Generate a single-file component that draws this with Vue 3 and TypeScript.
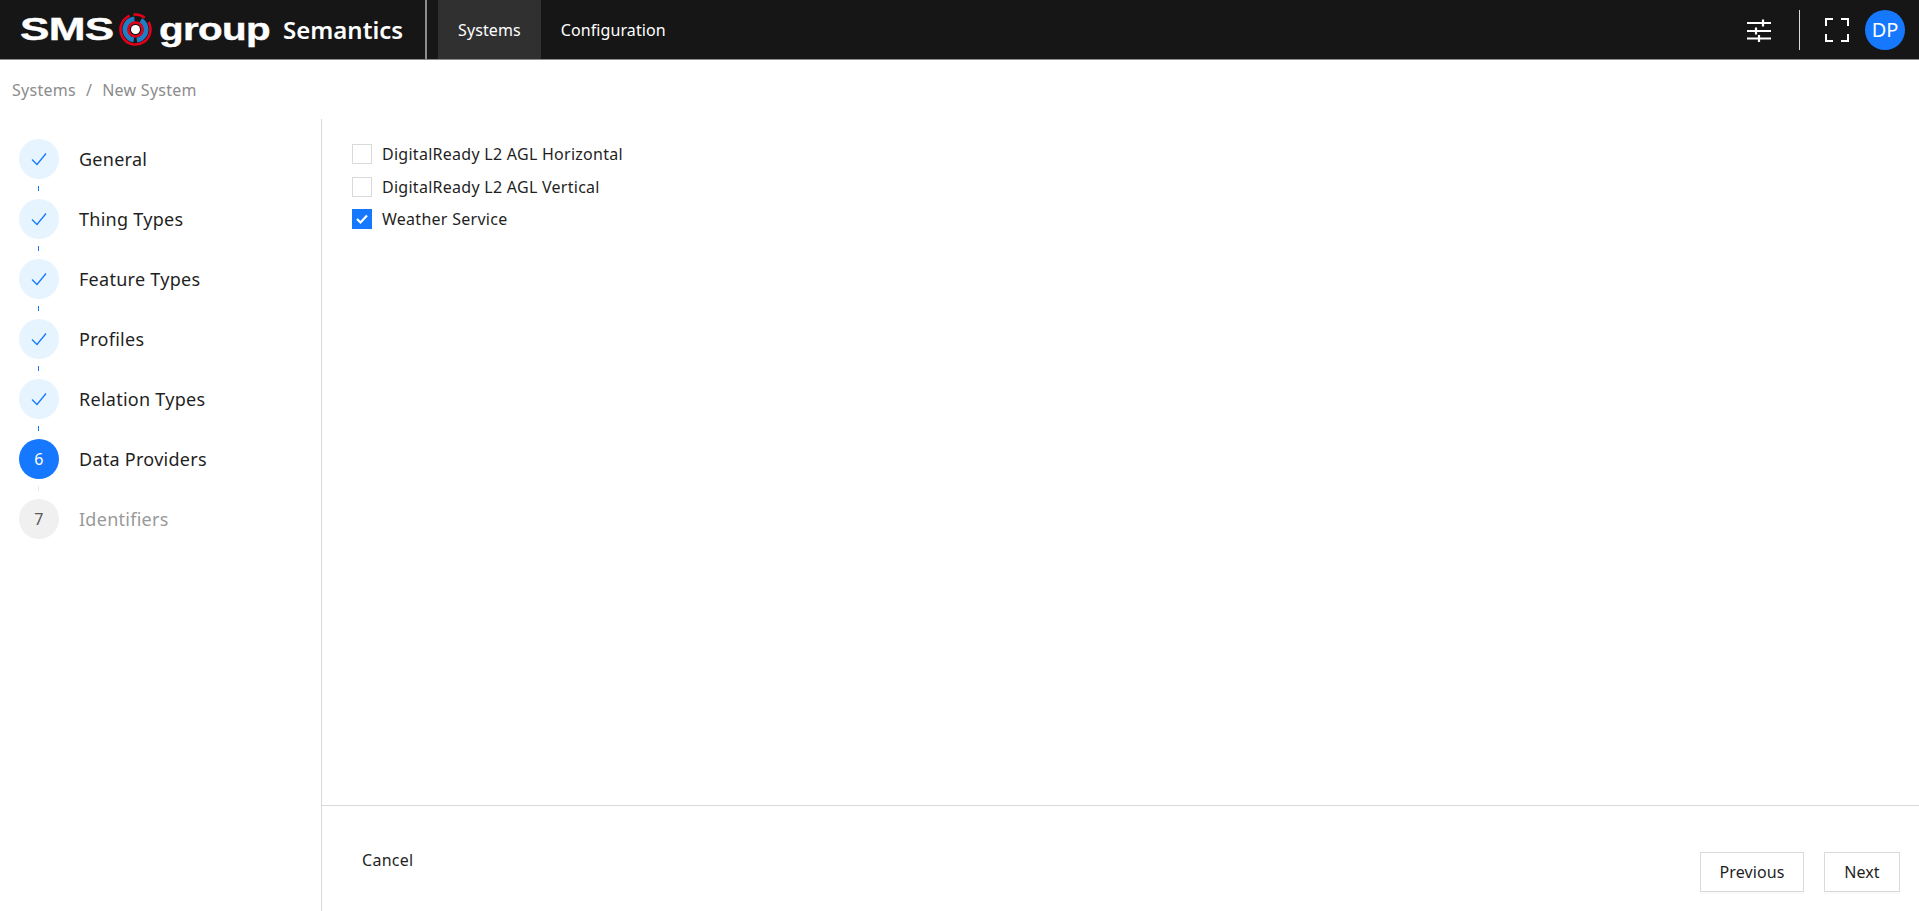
<template>
  <div class="page">
    <header class="topbar">
      <div class="brand">
        <span class="logo-sms">SMS</span>
        <svg class="logo-mark" viewBox="0 0 33 33" width="33" height="33">
          <circle cx="16.500" cy="16.500" r="10.500" fill="none" stroke="#1f7fc4" stroke-width="5" stroke-dasharray="26 3 30 7" transform="rotate(-60 16.500 16.500)" />
          <circle cx="16.500" cy="16.500" r="15" fill="none" stroke="#e2001a" stroke-width="2.600" stroke-dasharray="72 4 12 6" transform="rotate(-30 16.500 16.500)" />
          <circle cx="16.500" cy="16.500" r="7" fill="none" stroke="#e2001a" stroke-width="2.600" />
          <circle cx="16.500" cy="16.500" r="4.500" fill="#fff" />
        </svg>
        <span class="logo-group">group</span>
        <span class="product">Semantics</span>
      </div>
      <nav class="nav">
        <a v-for="item in navItems" :key="item" class="nav-item" :class="{ active: item === 'Systems' }">{{ item }}</a>
      </nav>
      <div class="tools">
        <svg class="tool-icon" viewBox="0 0 24 24" width="24" height="24">
          <path d="M0 5h15M17 5h7M16 1.500v7M0 13h8M10 13h14M9 9.500v7M0 20.500h11M13 20.500h11M12 17v7" fill="none" stroke="#fff" stroke-width="2.200" />
        </svg>
        <span class="tool-sep"></span>
        <svg class="tool-icon" viewBox="0 0 24 24" width="24" height="24">
          <path d="M1 8V1h7M16 1h7v7M23 16v7h-7M8 23H1v-7" fill="none" stroke="#fff" stroke-width="2" />
        </svg>
        <span class="avatar">DP</span>
      </div>
    </header>

    <div class="crumbs">
      <span>Systems</span>
      <span class="crumb-sep">/</span>
      <span>New System</span>
    </div>

    <div class="main">
      <aside class="sidebar">
        <div v-for="(step, i) in steps" :key="step.title" class="step" :class="step.state">
          <div class="step-side">
            <div class="step-circle">
              <svg v-if="step.state === 'done'" viewBox="0 0 16 14" width="16" height="14">
                <path d="M1 7.500l5 5L15 1.500" fill="none" stroke="#1677ff" stroke-width="1.300" />
              </svg>
              <span v-else>{{ i + 1 }}</span>
            </div>
            <span v-if="i < steps.length - 1" class="step-dash"></span>
          </div>
          <span class="step-title">{{ step.title }}</span>
        </div>
      </aside>

      <section class="content">
        <div class="options">
          <label v-for="opt in providers" :key="opt.name" class="option">
            <span class="box" :class="{ checked: opt.checked }">
              <svg v-if="opt.checked" viewBox="0 0 14 12" width="14" height="12">
                <path d="M2 6l3.500 3.500L12 2.500" fill="none" stroke="#fff" stroke-width="2.200" />
              </svg>
            </span>
            <span>{{ opt.name }}</span>
          </label>
        </div>
        <footer class="footer">
          <span class="cancel">Cancel</span>
          <div class="actions">
            <button class="btn btn-prev">Previous</button>
            <button class="btn btn-next">Next</button>
          </div>
        </footer>
      </section>
    </div>
  </div>
</template>

<script setup lang="ts">
const navItems = ['Systems', 'Configuration']

const steps = [
  { title: 'General', state: 'done' },
  { title: 'Thing Types', state: 'done' },
  { title: 'Feature Types', state: 'done' },
  { title: 'Profiles', state: 'done' },
  { title: 'Relation Types', state: 'done' },
  { title: 'Data Providers', state: 'current' },
  { title: 'Identifiers', state: 'todo' }
]

const providers = [
  { name: 'DigitalReady L2 AGL Horizontal', checked: false },
  { name: 'DigitalReady L2 AGL Vertical', checked: false },
  { name: 'Weather Service', checked: true }
]
</script>

<style>
html,
body {
  margin: 0;
  background: #fff;
}
</style>

<style scoped>
.page {
  width: 1919px;
  height: 911px;
  display: flex;
  flex-direction: column;
  font-family: 'Noto Sans', 'Open Sans', sans-serif;
  font-size: 16px;
  letter-spacing: 0.27px;
  color: #1f1f1f;
  overflow: hidden;
}
.topbar {
  height: 59px;
  flex: none;
  display: flex;
  align-items: stretch;
  background: #161616;
  border-bottom: 1px solid #8c8c8c;
  color: #fff;
}
.brand {
  width: 427px;
  flex: none;
  box-sizing: border-box;
  display: flex;
  align-items: center;
  border-right: 2px solid #8c8c8c;
  padding-left: 20px;
  margin-right: 11px;
}
.logo-sms,
.logo-group {
  font-family: 'Liberation Sans', sans-serif;
  font-weight: 700;
  font-size: 32px;
  letter-spacing: -0.5px;
  -webkit-text-stroke: 0.4px #fff;
  display: inline-block;
  transform-origin: left center;
}
.logo-sms {
  width: 99px;
  flex: none;
  transform: scaleX(1.38);
}
.logo-mark {
  flex: none;
  margin-right: 7px;
}
.logo-group {
  width: 124px;
  flex: none;
  transform: scaleX(1.26);
}
.product {
  font-size: 24px;
  font-weight: 600;
  letter-spacing: 0;
}
.nav {
  display: flex;
}
.nav-item {
  display: flex;
  align-items: center;
  padding: 0 20px;
  height: 59px;
  letter-spacing: 0.1px;
}
.nav-item.active {
  background: #303030;
}
.tools {
  margin-left: auto;
  display: flex;
  align-items: center;
  padding-right: 14px;
}
.tool-icon {
  flex: none;
}
.tool-sep {
  width: 1px;
  height: 40px;
  background: #d9d9d9;
  margin: 0 25px 0 28px;
}
.avatar {
  width: 40px;
  height: 40px;
  border-radius: 50%;
  background: #1677ff;
  margin-left: 16px;
  display: flex;
  align-items: center;
  justify-content: center;
  font-size: 20px;
  letter-spacing: 0;
}
.crumbs {
  height: 59px;
  flex: none;
  display: flex;
  align-items: center;
  gap: 10px;
  padding-left: 12px;
  color: #8c8c8c;
}
.main {
  flex: 1;
  display: flex;
  min-height: 0;
}
.sidebar {
  width: 321px;
  flex: none;
  border-right: 1px solid #d9d9d9;
  padding-top: 20px;
}
.step {
  display: flex;
  height: 60px;
  padding-left: 19px;
}
.step-side {
  width: 40px;
  display: flex;
  flex-direction: column;
  align-items: center;
}
.step-circle {
  width: 40px;
  height: 40px;
  flex: none;
  border-radius: 50%;
  display: flex;
  align-items: center;
  justify-content: center;
  background: #e6f4ff;
}
.step-dash {
  width: 1px;
  height: 5px;
  margin-top: 7px;
  margin-left: -2px;
  background: #1677ff;
}
.step.current .step-circle {
  background: #1677ff;
  color: #fff;
}
.step.current .step-dash {
  background: #e8e8e8;
}
.step.todo .step-circle {
  background: #f0f0f0;
  color: #595959;
}
.step-title {
  margin-left: 20px;
  font-size: 18px;
  line-height: 40px;
}
.step.todo .step-title {
  color: #999;
}
.content {
  flex: 1;
  display: flex;
  flex-direction: column;
  min-width: 0;
}
.options {
  flex: 1;
  padding: 25px 30px 0;
}
.option {
  display: flex;
  align-items: center;
  gap: 10px;
  height: 20px;
  margin-bottom: 12.500px;
}
.box {
  width: 20px;
  height: 20px;
  box-sizing: border-box;
  border: 1px solid #d9d9d9;
  display: flex;
  align-items: center;
  justify-content: center;
}
.box.checked {
  background: #1677ff;
  border-color: #1677ff;
}
.footer {
  height: 106px;
  flex: none;
  box-sizing: border-box;
  border-top: 1px solid #d9d9d9;
  display: flex;
  justify-content: space-between;
  padding: 46px 19px 0 40px;
}
.cancel {
  line-height: 20px;
  margin-top: -2px;
}
.actions {
  display: flex;
  gap: 20px;
}
.btn {
  height: 40px;
  padding: 0;
  background: #fff;
  border: 1px solid #d9d9d9;
  box-shadow: 0 2px 0 rgba(0, 0, 0, 0.02);
  font: inherit;
  letter-spacing: 0.1px;
  color: inherit;
}
.btn-prev {
  width: 104px;
}
.btn-next {
  width: 76px;
}
</style>
